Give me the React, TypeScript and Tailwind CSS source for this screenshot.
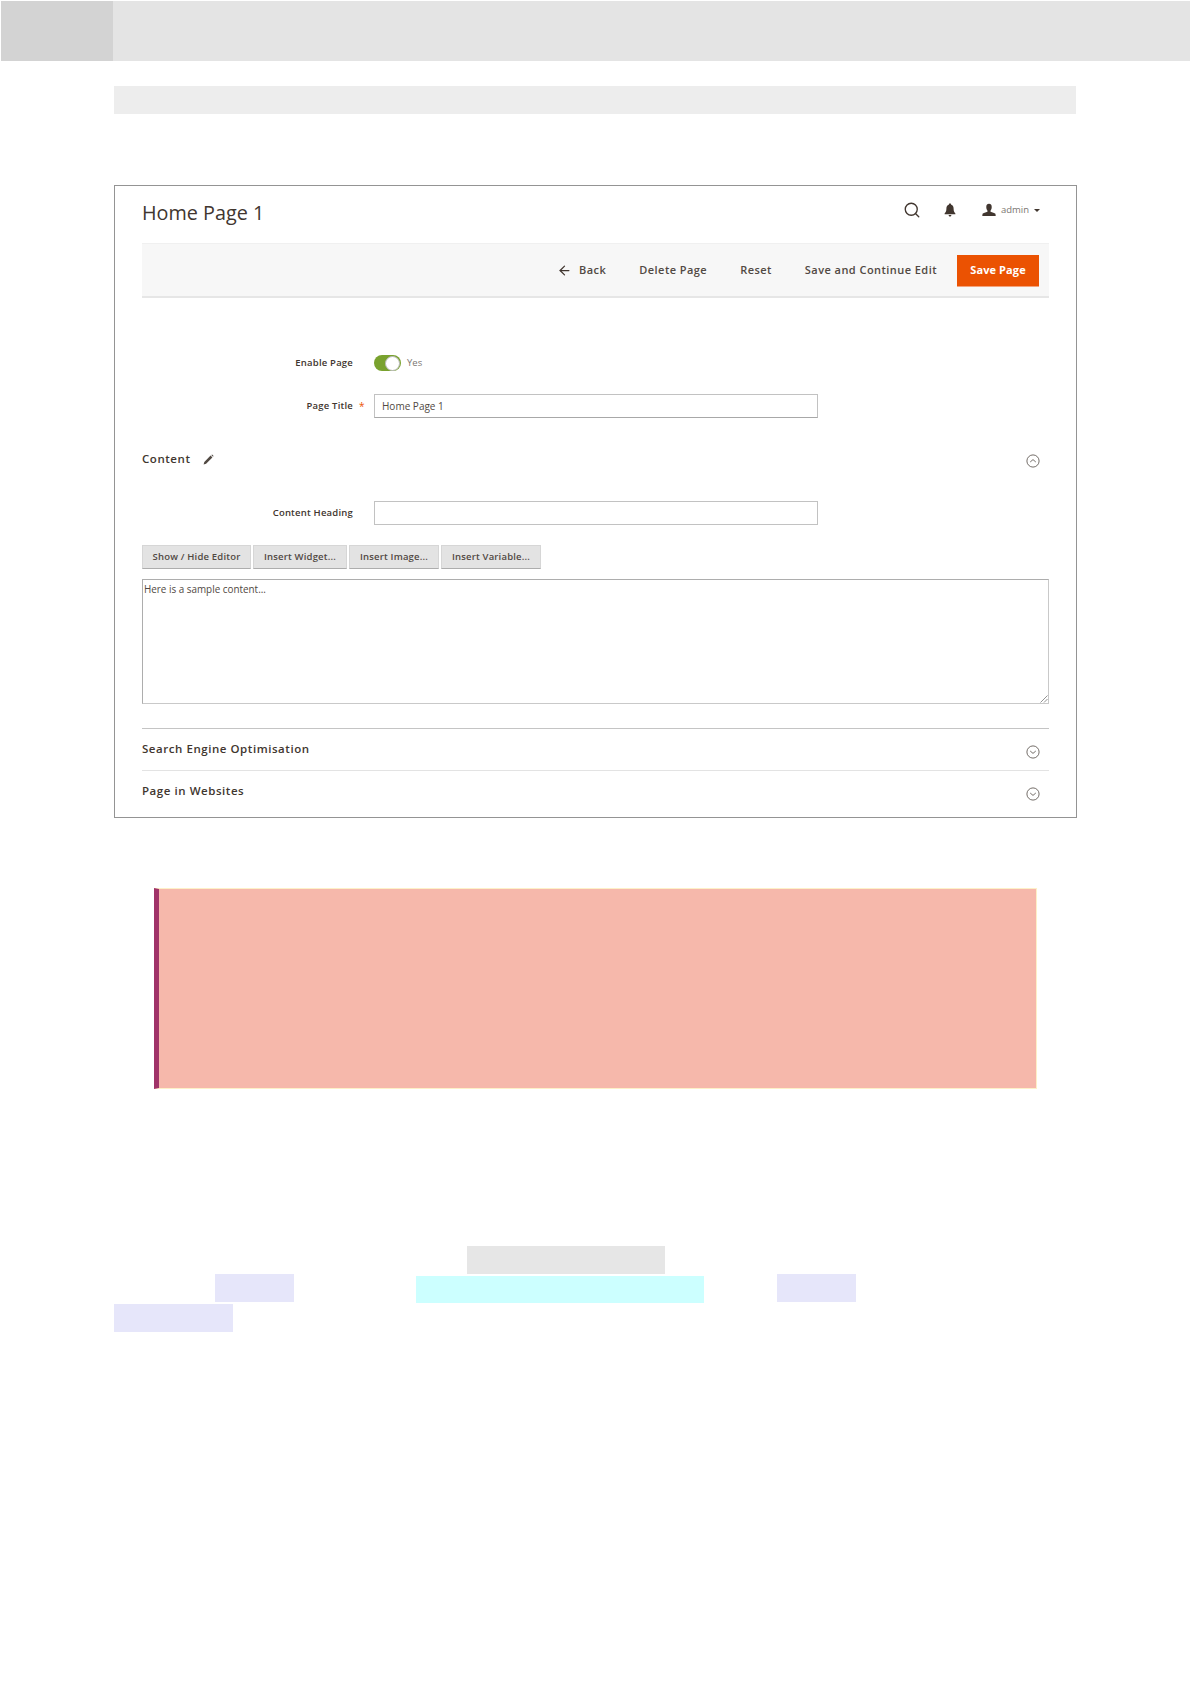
import React from "react";
import { ArrowLeft, Search } from "lucide-react";

const Chevron = ({ up = false }: { up?: boolean }) => (
  <svg width="14" height="14" viewBox="0 0 14 14" fill="none" stroke="#514943" strokeWidth="0.8">
    <circle cx="7" cy="7" r="6.1" />
    <path d={up ? "M4.2 8 L7 5.6 L9.8 8" : "M4.2 6 L7 8.4 L9.8 6"} />
  </svg>
);

const Section = ({ title, top }: { title: string; top: string }) => (
  <div className={`flex h-[42px] items-center justify-between pr-[9px] border-t ${top}`}>
    <span className="-mt-[1px] text-[11.5px] font-semibold tracking-[0.55px] text-[#41362f]">{title}</span>
    <span className="mt-1">
      <Chevron />
    </span>
  </div>
);

const EditorButton = ({ label, width }: { label: string; width: string }) => (
  <button className={`h-6 ${width} bg-[#e3e3e3] border border-[#d6d6d6] border-b-[#adadad] text-[9.5px] font-semibold tracking-[0.18px] text-[#514943] text-center`}>
    {label}
  </button>
);

const Toolbar = () => (
  <div className="mt-[17px] flex h-[55px] items-center justify-end gap-[33px] bg-[#f7f7f7] border-t border-[#f0f0f0] border-b-2 border-b-[#e6e6e6] pr-[10px] text-[11px] font-semibold tracking-[0.45px] text-[#514943]">
    <span className="flex items-center gap-[7px]">
      <ArrowLeft size={15} strokeWidth={2} color="#41362f" />
      Back
    </span>
    <span>Delete Page</span>
    <span>Reset</span>
    <span>Save and Continue Edit</span>
    <button className="-ml-[13px] mt-[1px] h-8 w-[82px] bg-[#eb5202] border-b border-[#f4a27a] text-white text-[11px] font-bold tracking-[0.1px]">Save Page</button>
  </div>
);

const App = () => {
  return (
    <div className="relative w-[1190px] h-[1684px] bg-white overflow-hidden font-['Open_Sans',sans-serif]">
      <div className="ml-px mt-px flex h-[60px]">
        <div className="w-[112px] bg-[#d3d3d3]"></div>
        <div className="flex-1 bg-[#e4e4e4]"></div>
      </div>
      <div className="ml-[114px] mt-[25px] h-[28px] w-[962px] bg-[#ededed]"></div>

      <section className="ml-[114px] mt-[71px] h-[633px] w-[963px] border border-[#949494] px-[27px]">
        <div className="flex h-[40px] items-end justify-between pr-[9px]">
          <h1 className="-mb-[4px] text-[19.8px] leading-[34px] text-[#41362f]">Home Page 1</h1>
          <div className="mb-[7px] flex items-center text-[#41362f]">
            <Search size={18} strokeWidth={1.8} color="#41362f" />
            <svg className="ml-[23px]" width="12" height="14" viewBox="0 0 12 14" fill="#41362f">
              <path d="M6 0.6 C6.8 0.6 7.2 1.1 7.2 1.7 C9 2.3 9.6 3.8 9.6 5.6 C9.6 8 10.2 9.4 11.4 10.6 L11.4 11.3 L0.6 11.3 L0.6 10.6 C1.8 9.4 2.4 8 2.4 5.6 C2.4 3.8 3 2.3 4.8 1.7 C4.8 1.1 5.2 0.6 6 0.6 Z M4.6 12 L7.4 12 C7.2 13 6.7 13.5 6 13.5 C5.3 13.5 4.8 13 4.6 12 Z" />
            </svg>
            <svg className="ml-[26px]" width="14" height="14" viewBox="0 0 15 14" fill="#41362f">
              <path d="M7.5 0.4 C9.6 0.4 10.6 2 10.4 4.2 C10.3 5.6 9.8 6.9 9 7.7 L9.2 8.8 C11 9.6 13.6 10 14.4 11 L14.7 13.4 L0.3 13.4 L0.6 11 C1.4 10 4 9.6 5.8 8.8 L6 7.7 C5.2 6.9 4.7 5.6 4.6 4.2 C4.4 2 5.4 0.4 7.5 0.4 Z" />
            </svg>
            <span className="ml-[5px] text-[9.5px] text-[#7b7571]">admin</span>
            <span className="ml-[5px] h-0 w-0 border-x-[3px] border-t-[3px] border-x-transparent border-t-[#41362f]"></span>
          </div>
        </div>

        <Toolbar />

        <div className="mt-[57px] flex h-[16px] items-center">
          <span className="w-[211px] text-right text-[9.5px] font-semibold tracking-[0.2px] text-[#41362f]">Enable Page</span>
          <span className="ml-[21px] flex h-4 w-[27px] items-center justify-end rounded-full bg-[#79a22e] pr-px">
            <span className="h-[15px] w-[15px] rounded-full bg-white border border-[#bbbbbb]"></span>
          </span>
          <span className="ml-[6px] text-[9.5px] text-[#7b7571]">Yes</span>
        </div>

        <div className="mt-[23px] flex h-6 items-center">
          <span className="w-[211px] text-right text-[9.5px] font-semibold tracking-[0.2px] text-[#41362f]">Page Title</span>
          <span className="ml-[6px] w-[15px] text-[10px] text-[#eb5202]">*</span>
          <div className="flex h-6 w-[444px] items-center border border-[#c2c2c2] border-b-[#a8a8a8] pl-[7px] text-[10px] text-[#514943]">Home Page 1</div>
        </div>

        <div className="mt-[33px] flex h-[16px] items-center">
          <span className="text-[11.5px] font-semibold tracking-[0.55px] text-[#41362f]">Content</span>
          <svg className="ml-[12px]" width="11" height="11" viewBox="0 0 11 11" fill="#514943">
            <path d="M0.6 10.4 L1.3 7.9 L7.6 1.6 L9.4 3.4 L3.1 9.7 Z M8.3 1 L9.1 0.4 L10.6 1.9 L10 2.7 Z" />
          </svg>
          <span className="ml-auto mr-[9px] mt-1">
            <Chevron up />
          </span>
        </div>

        <div className="mt-[34px] flex h-6 items-center">
          <span className="w-[211px] text-right text-[9.5px] font-semibold tracking-[0.2px] text-[#41362f]">Content Heading</span>
          <div className="ml-[21px] h-6 w-[444px] border border-[#c2c2c2]"></div>
        </div>

        <div className="mt-[20px] flex gap-[2px]">
          <EditorButton label="Show / Hide Editor" width="w-[109px]" />
          <EditorButton label="Insert Widget..." width="w-[94px]" />
          <EditorButton label="Insert Image..." width="w-[90px]" />
          <EditorButton label="Insert Variable..." width="w-[100px]" />
        </div>

        <div className="relative mt-[10px] h-[125px] border border-[#adadad] border-b-[#c9c9c9] border-r-[#c9c9c9] pl-[1px] pt-[2px] text-[9.9px] text-[#514943]">
          Here is a sample content...
          <svg className="absolute bottom-0 right-0" width="8" height="8" viewBox="0 0 8 8" stroke="#777777" strokeWidth="0.8">
            <path d="M0.5 7.5 L7.5 0.5 M4 7.5 L7.5 4" />
          </svg>
        </div>

        <div className="mt-[24px]">
          <Section title="Search Engine Optimisation" top="border-t-[#c4c4c4]" />
          <Section title="Page in Websites" top="border-t-[#e3e3e3]" />
        </div>
      </section>

      <div className="ml-[154px] mt-[70px] h-[201px] w-[883px] border-l-[5px] border-l-[#a03368] border-t border-r border-b border-t-[#fdf0c8] border-r-[#fdf0c8] border-b-[#fdf0c8] bg-[#f6b8ab]"></div>

      <div className="ml-[467px] mt-[157px] h-[28px] w-[198px] bg-[#e6e6e6]"></div>
      <div className="flex h-[30px] items-start">
        <div className="ml-[215px] h-[28px] w-[79px] bg-[#e6e6fa]"></div>
        <div className="ml-[122px] mt-[2px] h-[27px] w-[288px] bg-[#ccffff]"></div>
        <div className="ml-[73px] h-[28px] w-[79px] bg-[#e6e6fa]"></div>
      </div>
      <div className="ml-[114px] h-[28px] w-[119px] bg-[#e6e6fa]"></div>
    </div>
  );
};

export default App;
